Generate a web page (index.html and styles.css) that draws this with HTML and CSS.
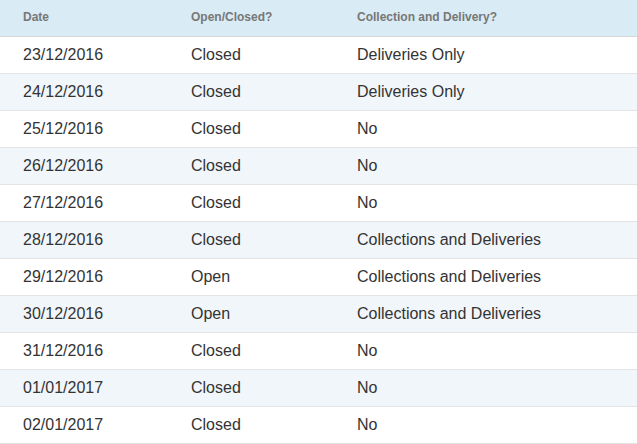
FILE: index.html
```html
<!DOCTYPE html>
<html>
<head>
<meta charset="utf-8">
<link rel="stylesheet" href="styles.css">
</head>
<body>
<table class="schedule">
  <thead>
    <tr><th class="c1">Date</th><th class="c2">Open/Closed?</th><th class="c3">Collection and Delivery?</th></tr>
  </thead>
  <tbody>
    <tr><td>23/12/2016</td><td>Closed</td><td>Deliveries Only</td></tr>
    <tr><td>24/12/2016</td><td>Closed</td><td>Deliveries Only</td></tr>
    <tr><td>25/12/2016</td><td>Closed</td><td>No</td></tr>
    <tr><td>26/12/2016</td><td>Closed</td><td>No</td></tr>
    <tr><td>27/12/2016</td><td>Closed</td><td>No</td></tr>
    <tr><td>28/12/2016</td><td>Closed</td><td>Collections and Deliveries</td></tr>
    <tr><td>29/12/2016</td><td>Open</td><td>Collections and Deliveries</td></tr>
    <tr><td>30/12/2016</td><td>Open</td><td>Collections and Deliveries</td></tr>
    <tr><td>31/12/2016</td><td>Closed</td><td>No</td></tr>
    <tr><td>01/01/2017</td><td>Closed</td><td>No</td></tr>
    <tr><td>02/01/2017</td><td>Closed</td><td>No</td></tr>
  </tbody>
</table>
</body>
</html>
```
FILE: styles.css
```css
html, body { margin: 0; padding: 0; background: #fff; }
.schedule {
  width: 637px;
  border-collapse: collapse;
  table-layout: fixed;
  font-family: "Liberation Sans", Arial, sans-serif;
}
.schedule .c1 { width: 168px; }
.schedule .c2 { width: 166px; }
.schedule .c3 { width: auto; }
.schedule th {
  background: #d9ebf5;
  color: #777;
  font-size: 12px;
  font-weight: bold;
  text-align: left;
  height: 36px;
  padding: 0 0 1px 23px;
  box-sizing: border-box;
  border-bottom: 1px solid #d6d6d6;
  vertical-align: middle;
}
.schedule td {
  color: #333;
  font-size: 16px;
  height: 37px;
  padding: 0 0 0 23px;
  box-sizing: border-box;
  border-bottom: 1px solid #e3e3e3;
  vertical-align: middle;
}
.schedule tbody tr:nth-child(even) td { background: #f1f6fa; }
```
